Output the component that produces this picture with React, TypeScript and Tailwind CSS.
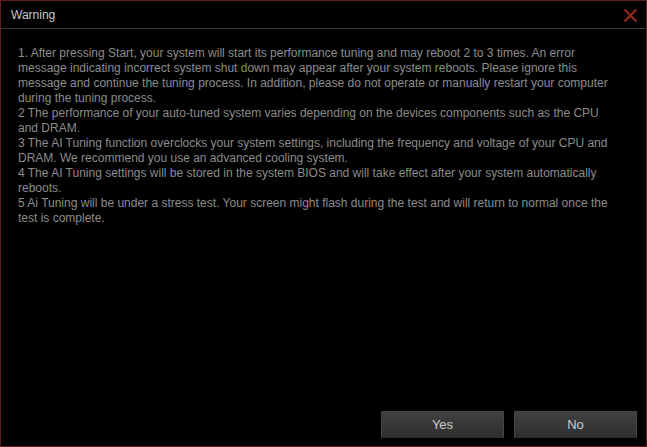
import React from 'react';

// the dialog wraps at fixed places, so keep the original breaks
const paragraphs: string[][] = [
  [
    '1. After pressing Start, your system will start its performance tuning and may reboot 2 to 3 times. An error',
    'message indicating incorrect system shut down may appear after your system reboots. Please ignore this',
    'message and continue the tuning process. In addition, please do not operate or manually restart your computer',
    'during the tuning process.',
  ],
  [
    '2 The performance of your auto-tuned system varies depending on the devices components such as the CPU',
    'and DRAM.',
  ],
  [
    '3 The AI Tuning function overclocks your system settings, including the frequency and voltage of your CPU and',
    'DRAM. We recommend you use an advanced cooling system.',
  ],
  [
    '4 The AI Tuning settings will be stored in the system BIOS and will take effect after your system automatically',
    'reboots.',
  ],
  [
    '5 Ai Tuning will be under a stress test. Your screen might flash during the test and will return to normal once the',
    'test is complete.',
  ],
];

const DialogButton: React.FC<{ label: string }> = ({ label }) => (
  <button className="w-[123px] h-[27px] bg-gradient-to-b from-[#404040] to-[#2f2f2f] border border-[#454545] border-b-[#2a2a2a] text-[#cccccc] text-[13px]">
    {label}
  </button>
);

export default function App() {
  return (
    <div className="w-[647px] h-[447px] bg-black border border-[#5e1f1f] flex flex-col font-['Liberation_Sans',Arial,sans-serif]">
      {/* Title bar */}
      <div className="h-[28px] flex items-center justify-between pl-[10px] pr-[8px] border-b border-[#3a3a3a] shrink-0">
        <span className="text-[12px] text-[#c8c8c8]">Warning</span>
        <svg width="15" height="15" viewBox="0 0 15 15" className="mt-[1px]">
          <path d="M1.5 1.5 L13.5 13.5 M13.5 1.5 L1.5 13.5" stroke="#952a1c" strokeWidth="2.2" />
        </svg>
      </div>

      {/* Body */}
      <div className="flex-1 pt-[17px] pl-[17px] text-[12px] leading-[15px] text-[#8c8c8c] whitespace-nowrap">
        {paragraphs.map((p) => (
          <p key={p[0]}>
            {p.map((l, i) => (
              <React.Fragment key={i}>
                {i > 0 && <br />}
                {l}
              </React.Fragment>
            ))}
          </p>
        ))}
      </div>

      {/* Buttons */}
      <div className="flex justify-end gap-[10px] pr-[9px] pb-[8px]">
        <DialogButton label="Yes" />
        <DialogButton label="No" />
      </div>
    </div>
  );
}
